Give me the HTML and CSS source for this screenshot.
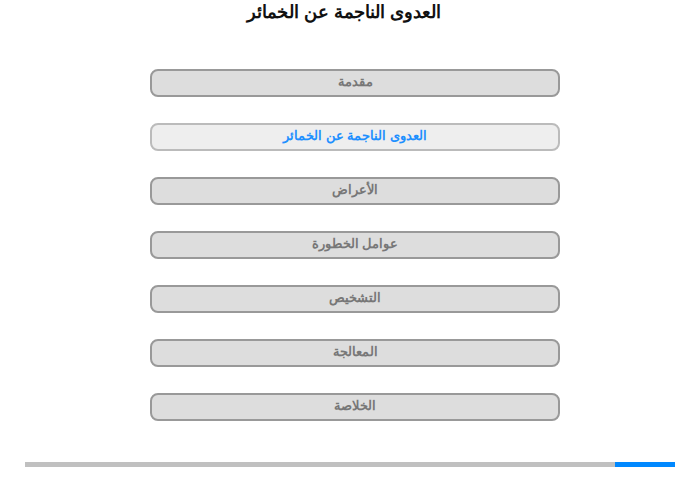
FILE: index.html
```html
<!DOCTYPE html>
<html lang="ar" dir="rtl">
<head>
    <meta charset="UTF-8">
    <title>العدوى الناجمة عن الخمائر</title>
    <link rel="stylesheet" href="styles.css">
</head>
<body>
    <h1 class="title">العدوى الناجمة عن الخمائر</h1>
    <nav class="menu">
        <button class="menu-item">مقدمة</button>
        <button class="menu-item active">العدوى الناجمة عن الخمائر</button>
        <button class="menu-item">الأعراض</button>
        <button class="menu-item">عوامل الخطورة</button>
        <button class="menu-item">التشخيص</button>
        <button class="menu-item">المعالجة</button>
        <button class="menu-item">الخلاصة</button>
    </nav>
    <div class="progress">
        <div class="progress-fill" style="width: 60px"></div>
    </div>
</body>
</html>
```

FILE: styles.css
```css
body {
    margin: 0;
    font-family: "Liberation Sans", Arial, sans-serif;
    background-color: #fff;
    color: #111;
}

.title {
    font-size: 18px;
    font-weight: bold;
    text-align: center;
    margin: 1px 0 0 0;
    padding-right: 12px;
    line-height: 22px;
}

.menu {
    display: flex;
    flex-direction: column;
    align-items: center;
    gap: 26px;
    margin-top: 46px;
    padding-left: 10px;
}

.menu-item {
    width: 410px;
    height: 28px;
    border: 2px solid #999;
    border-radius: 8px;
    background-color: #ddd;
    color: #777;
    font-family: "Liberation Sans", Arial, sans-serif;
    font-size: 13px;
    font-weight: bold;
    padding: 0 0 3px 0;
    cursor: pointer;
}

.menu-item.active {
    border-color: #bbb;
    background-color: #eee;
    color: #1e90ff;
}

.progress {
    display: flex;
    width: 650px;
    height: 5px;
    margin: 41px auto 0 auto;
    background-color: #c0c0c0;
}

.progress-fill {
    height: 100%;
    background-color: #0088ff;
}
```
